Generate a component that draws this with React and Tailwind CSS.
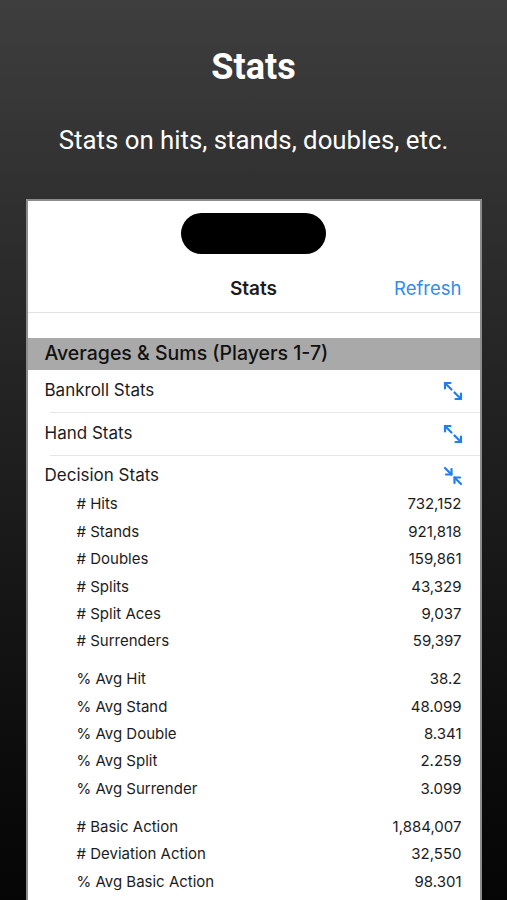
import React from 'react';

const groups = [
  [
    ['# Hits', '732,152'],
    ['# Stands', '921,818'],
    ['# Doubles', '159,861'],
    ['# Splits', '43,329'],
    ['# Split Aces', '9,037'],
    ['# Surrenders', '59,397'],
  ],
  [
    ['% Avg Hit', '38.2'],
    ['% Avg Stand', '48.099'],
    ['% Avg Double', '8.341'],
    ['% Avg Split', '2.259'],
    ['% Avg Surrender', '3.099'],
  ],
  [
    ['# Basic Action', '1,884,007'],
    ['# Deviation Action', '32,550'],
    ['% Avg Basic Action', '98.301'],
  ],
];

// SF-symbol style expand / collapse arrows
const ExpandIcon = () => (
  <svg width="20" height="20" viewBox="0 0 20 20" fill="none" stroke="#1f7ff0" strokeWidth="2.2" strokeLinecap="round" strokeLinejoin="round">
    <path d="M8.5 8.5L2 2" />
    <path d="M2 7.5V2h5.5" />
    <path d="M11.5 11.5L18 18" />
    <path d="M12.5 18h5.5v-5.5" />
  </svg>
);

const CollapseIcon = () => (
  <svg width="20" height="20" viewBox="0 0 20 20" fill="none" stroke="#1f7ff0" strokeWidth="2.2" strokeLinecap="round" strokeLinejoin="round">
    <path d="M2 2l6.5 6.5" />
    <path d="M3 8.5h5.5V3" />
    <path d="M18 18l-6.5-6.5" />
    <path d="M17 11.5h-5.5V17" />
  </svg>
);

const Section = ({ title, open, last }) => (
  <div className="flex flex-col">
    <div className={`flex items-center justify-between pl-[17px] pr-[17px] ${open ? 'h-[35px] pt-[5px]' : 'h-[42px]'}`}>
      <span className="text-[17px] text-[#1c1c1e]">{title}</span>
      {open ? <CollapseIcon /> : <ExpandIcon />}
    </div>
    {!last && <div className="ml-[22px] h-px bg-[#e6e6e6]" />}
  </div>
);

export default function App() {
  return (
    <div className="h-[900px] overflow-hidden flex flex-col items-center bg-gradient-to-b from-[#3e3e3e] to-[#050505]" style={{ fontFamily: 'Roboto, sans-serif' }}>
      <h1 className="mt-[45px] text-[36px] leading-[44px] font-bold text-white">Stats</h1>
      <p className="mt-[36px] text-[25.8px] leading-[30px] text-white">Stats on hits, stands, doubles, etc.</p>

      <div className="mt-[44px] w-[456px] flex-1 bg-white border-x-2 border-t-2 border-[#8c8c8c] flex flex-col" style={{ fontFamily: 'Inter, "Liberation Sans", sans-serif' }}>
        <div className="mt-[12px] mx-auto w-[145px] h-[41px] rounded-full bg-black" />

        <div className="mt-[12px] h-[46px] grid grid-cols-3 items-center px-[18px]">
          <span />
          <span className="text-center text-[19px] font-semibold text-[#1c1c1e]">Stats</span>
          <span className="text-right text-[18.5px] text-[#2f8cf0]">Refresh</span>
        </div>
        <div className="h-px bg-[#e2e2e2]" />

        <div className="mt-[25px] h-[32px] bg-[#a9a9a9] flex items-center pl-[17px]">
          <span className="text-[19.5px] font-medium text-[#111]">Averages &amp; Sums (Players 1-7)</span>
        </div>

        <Section title="Bankroll Stats" />
        <Section title="Hand Stats" />
        <Section title="Decision Stats" open last />

        <div className="flex flex-col gap-[10.5px] pl-[49px] pr-[18px]">
          {groups.map((g, gi) => (
            <div key={gi} className="flex flex-col">
              {g.map(([label, value]) => (
                <div key={label} className="h-[27.4px] flex items-center justify-between text-[15px] text-[#1c1c1e]">
                  <span>{label}</span>
                  <span>{value}</span>
                </div>
              ))}
            </div>
          ))}
        </div>
      </div>
    </div>
  );
}
